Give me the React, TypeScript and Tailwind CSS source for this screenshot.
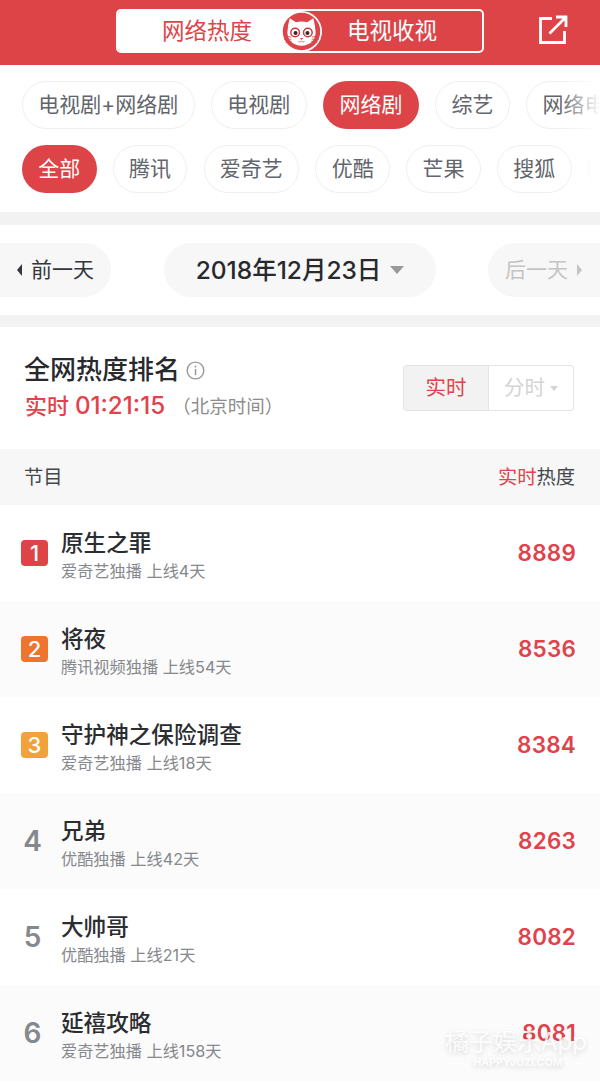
import React from 'react';

const FONT = '"Inter", "Noto Sans CJK SC", sans-serif';

const typeTabs = [
  { text: '电视剧+网络剧', active: false },
  { text: '电视剧', active: false },
  { text: '网络剧', active: true },
  { text: '综艺', active: false },
  { text: '网络电影', active: false },
];

const siteTabs = [
  { text: '全部', active: true },
  { text: '腾讯', active: false },
  { text: '爱奇艺', active: false },
  { text: '优酷', active: false },
  { text: '芒果', active: false },
  { text: '搜狐', active: false },
  { text: '乐视', active: false },
];

const shows = [
  { rank: 1, name: '原生之罪', info: '爱奇艺独播 上线4天', heat: 8889, badge: 'bg-[#dd4448]' },
  { rank: 2, name: '将夜', info: '腾讯视频独播 上线54天', heat: 8536, badge: 'bg-[#ee752d]' },
  { rank: 3, name: '守护神之保险调查', info: '爱奇艺独播 上线18天', heat: 8384, badge: 'bg-[#f2a23a]' },
  { rank: 4, name: '兄弟', info: '优酷独播 上线42天', heat: 8263, badge: '' },
  { rank: 5, name: '大帅哥', info: '优酷独播 上线21天', heat: 8082, badge: '' },
  { rank: 6, name: '延禧攻略', info: '爱奇艺独播 上线158天', heat: 8081, badge: '' },
];

const CatLogo = () => (
  <svg viewBox="0 0 40 40" className="w-[41px] h-[41px]">
    <circle cx="20" cy="20" r="20" fill="#fff" />
    <circle cx="20" cy="20" r="18.3" fill="#dd4448" />
    <path d="M8.5 7 L14.5 11 Q20 9.5 25.5 11 L31.5 7 Q33.5 14 33.8 21 Q33 33 20 34 Q7 33 6.2 21 Q6.5 14 8.5 7 Z" fill="#fff" />
    <circle cx="13.8" cy="21" r="4.2" fill="#fff" stroke="#c9383d" strokeWidth="1.4" />
    <circle cx="26.2" cy="21" r="4.2" fill="#fff" stroke="#c9383d" strokeWidth="1.4" />
    <circle cx="14.2" cy="21.5" r="2" fill="#3a2a2a" />
    <circle cx="25.8" cy="21.5" r="2" fill="#3a2a2a" />
    <path d="M18.4 26.4 L21.6 26.4 L20 28.2 Z" fill="#dd4448" />
    <path d="M17 29.8 Q18.6 31 20 29.4 Q21.4 31 23 29.8" fill="none" stroke="#dd4448" strokeWidth="0.7" />
    <path d="M30 25.5 L37 24 M30 27.5 L37 27.5 M29.5 29.5 L35.5 31 M10 25.5 L3 24 M10 27.5 L3 27.5 M10.5 29.5 L4.5 31" stroke="#dd4448" strokeWidth="0.8" />
  </svg>
);

const ShareIcon = () => (
  <svg viewBox="0 0 30 30" className="w-[30px] h-[30px]" fill="none" stroke="#fff" strokeWidth="2.8">
    <path d="M14 3.5 H2.5 V27.5 H26.5 V16" />
    <path d="M11.5 18.5 L27 3 M18 2 H28 V12" />
  </svg>
);

const Pill = ({ text, active }: { text: string; active: boolean }) => (
  <div
    className={
      active
        ? 'shrink-0 h-[48px] px-[16.3px] rounded-full bg-[#dd4448] text-white text-[21px] flex items-center'
        : 'shrink-0 h-[48px] px-[15.3px] rounded-full border border-[#efefef] bg-white text-[#62656b] text-[21px] flex items-center'
    }
  >
    {text}
  </div>
);

export default function App() {
  return (
    <div className="relative w-[600px] h-[1083px] overflow-hidden bg-white" style={{ fontFamily: FONT }}>
      {/* Top bar */}
      <header className="relative h-[65px] bg-[#dd4448] flex items-center justify-center">
        <div className="relative -mt-[3px] w-[368px] h-[44px] rounded-[5px] border-2 border-white flex overflow-hidden">
          <div className="w-[184px] bg-white text-[#dd4448] text-[22.5px] flex items-center justify-center pl-[1px] pr-[7px]">
            网络热度
          </div>
          <div className="flex-1 text-white text-[22.5px] flex items-center justify-center">电视收视</div>
        </div>
        <div className="absolute left-[281px] top-[11px]">
          <CatLogo />
        </div>
        <div className="absolute left-[538px] top-[15px]">
          <ShareIcon />
        </div>
      </header>

      {/* Category tabs */}
      <section className="relative h-[147px] pt-[16px] overflow-hidden">
        <div className="flex gap-[16.5px] pl-[22px]">
          {typeTabs.map((t) => (
            <Pill key={t.text} text={t.text} active={t.active} />
          ))}
        </div>
        <div className="flex gap-[16.2px] pl-[22px] mt-[16px]">
          {siteTabs.map((t) => (
            <Pill key={t.text} text={t.text} active={t.active} />
          ))}
        </div>
        <div className="absolute right-0 top-0 bottom-0 w-[40px] bg-gradient-to-r from-white/0 to-white" />
      </section>

      <div className="h-[13px] bg-[#f2f2f2]" />

      {/* Date switcher */}
      <section className="h-[90px] flex items-center justify-between">
        <div className="w-[111px] h-[54px] rounded-r-full bg-[#f7f7f7] flex items-center pl-[17px] gap-[9px] text-[21px] text-[#33363b]">
          <span className="w-0 h-0 border-y-[6px] border-y-transparent border-r-[5px] border-r-[#33363b]" />
          前一天
        </div>
        <div className="w-[272px] h-[54px] rounded-full bg-[#f7f7f7] flex items-center justify-center gap-[9px] pl-[1px] text-[24.5px] font-medium text-[#27292d]">
          2018年12月23日
          <span className="w-0 h-0 border-x-[7px] border-x-transparent border-t-[8px] border-t-[#999]" />
        </div>
        <div className="w-[112px] h-[54px] rounded-l-full bg-[#f7f7f7] flex items-center pl-[17px] gap-[9px] text-[21px] text-[#c4c4c4]">
          后一天
          <span className="w-0 h-0 border-y-[6px] border-y-transparent border-l-[5px] border-l-[#c4c4c4]" />
        </div>
      </section>

      <div className="h-[12px] bg-[#f2f2f2]" />

      {/* Ranking title */}
      <section className="h-[122px] flex justify-between pl-[24px] pr-[26px]">
        <div className="pt-[24px]">
          <div className="flex items-center gap-[6px] text-[26px] leading-[38px] font-medium text-[#27292d]">
            全网热度排名
            <svg viewBox="0 0 20 20" className="w-[19px] h-[19px]" fill="none" stroke="#999">
              <circle cx="10" cy="10" r="8.8" strokeWidth="1.4" />
              <path d="M10 8.5 V15" strokeWidth="1.6" />
              <circle cx="10" cy="5.8" r="1" fill="#999" stroke="none" />
            </svg>
          </div>
          <div className="flex items-center mt-[1px] pl-[1px] text-[22px] leading-[32px]">
            <span className="text-[#e0434b] font-medium">
              实时 <span className="text-[24.2px]">01:21:15</span>
            </span>
            <span className="ml-[7px] text-[18.5px] text-[#8d8d8d]">（北京时间）</span>
          </div>
        </div>
        <div className="mt-[38px] w-[171px] h-[46px] flex rounded-[3px] border border-[#e4e4e4] text-[20.5px]">
          <div className="w-[85px] bg-[#f2f2f2] border-r border-[#e4e4e4] text-[#e0434b] flex items-center justify-center">
            实时
          </div>
          <div className="flex-1 text-[#d4d4d4] flex items-center justify-center gap-[5px]">
            分时
            <span className="w-0 h-0 border-x-[4px] border-x-transparent border-t-[5px] border-t-[#d4d4d4]" />
          </div>
        </div>
      </section>

      {/* Table head */}
      <div className="h-[56px] bg-[#f7f7f7] flex items-center justify-between pl-[24px] pr-[25px] text-[19.3px] text-[#44474c]">
        <span>节目</span>
        <span>
          <span className="text-[#e0434b]">实时</span>热度
        </span>
      </div>

      {/* Rows */}
      {shows.map((s, i) => (
        <div
          key={s.rank}
          className={
            i % 2 === 1
              ? 'h-[96px] bg-[#fbfbfb] flex items-center pl-[21px] pr-[24px]'
              : 'h-[96px] bg-white flex items-center pl-[21px] pr-[24px]'
          }
        >
          <div className="w-[40px] shrink-0">
            {s.badge ? (
              <div className={`w-[27px] h-[26px] rounded-[4px] ${s.badge} text-white text-[22px] font-medium flex items-center justify-center`}>
                {s.rank}
              </div>
            ) : (
              <div className="w-[23px] text-center text-[28px] font-semibold text-[#85888c]">{s.rank}</div>
            )}
          </div>
          <div className="flex-1 mt-[3px]">
            <div className="text-[22.6px] leading-[34px] font-medium text-[#2b2d31]">{s.name}</div>
            <div className="-mt-[1px] text-[16.2px] leading-[24px] text-[#85888c]">{s.info}</div>
          </div>
          <div className="text-[22.5px] font-semibold tracking-[0.2px] text-[#e0434b]">{s.heat}</div>
        </div>
      ))}

      {/* Watermark */}
      <div className="absolute left-[445px] top-[1026px] w-[142px] text-white/85 [text-shadow:0_2px_5px_rgba(0,0,0,0.15)]">
        <div className="text-[24px] leading-[32px] whitespace-nowrap">橘子娱乐App</div>
        <div className="flex items-center justify-between text-[10.5px] leading-[14px] mt-[-2px] font-bold whitespace-nowrap">
          <span className="w-[16px] h-px bg-white/85" />
          HAPPYJUZI.COM
          <span className="w-[12px] h-px bg-white/85" />
        </div>
      </div>
    </div>
  );
}
